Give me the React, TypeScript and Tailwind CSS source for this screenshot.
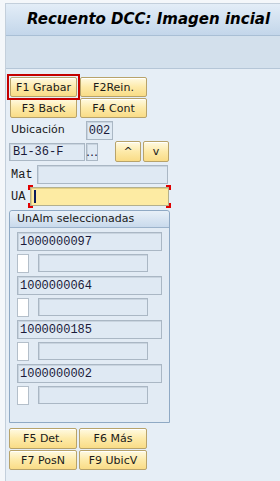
import React from "react";

const sans = { fontFamily: '"DejaVu Sans", "Liberation Sans", sans-serif' };
const mono = { fontFamily: '"Liberation Mono", "DejaVu Sans Mono", monospace' };

const btn =
  "flex items-center justify-center rounded-[2px] border border-[#b8a36a] bg-gradient-to-b from-[#fffae2] via-[#fdeaa9] to-[#f9dc86] text-[11px] leading-none text-[#1a1a1a] shadow-[inset_0_1px_0_#ffffff]";

const field =
  "border border-[#aab7c4] bg-[#dfe9f3] shadow-[inset_1px_1px_0_#c9d4df] text-[12px] leading-none text-[#1a1a3a] flex items-center";

function Btn({ label, w, h = 20, extra = "" }: { label: string; w: number; h?: number; extra?: string }) {
  return (
    <div className={`${btn} ${extra}`} style={{ ...sans, width: w, height: h }}>
      {label}
    </div>
  );
}

function Item({ value }: { value: string }) {
  return (
    <div className="flex flex-col gap-[3px]">
      <div className={`${field} h-[19px] w-[145px] pl-[2px]`} style={mono}>
        {value}
      </div>
      <div className="flex gap-[9px]">
        <div className="h-[19px] w-[12px] border border-[#b4bfca] bg-white" />
        <div className={`${field} h-[18px] w-[110px]`} />
      </div>
    </div>
  );
}

export default function App() {
  return (
    <div className="h-[481px] w-[280px] overflow-hidden bg-[#f4f7fa] pl-[5px] pt-[3px]" style={sans}>
      <div className="flex h-[478px] flex-col border-l border-t border-[#c3cfdb] bg-[#e6eef6]">
        <div className="flex h-[32px] items-center border-b border-[#a9bfd5] bg-gradient-to-b from-[#e3edf7] to-[#c3d6ea] pl-[21px]">
          <span className="text-[15px] font-bold italic text-black" style={sans}>
            Recuento DCC: Imagen incial
          </span>
        </div>
        <div className="h-[33px] border-b border-[#b5c6d7] bg-[#d3e0ec]" />
        <div className="flex flex-col pl-[3px]">
          <div className="mt-[8px] flex gap-[3px] pl-[1px]">
            <div className="relative">
              <Btn label="F1 Grabar" w={67} />
              <div className="absolute -inset-[3px] border-2 border-[#c40000]" />
            </div>
            <Btn label="F2Rein." w={67} />
          </div>
          <div className="mt-[1px] flex gap-[3px] pl-[1px]">
            <Btn label="F3 Back" w={67} />
            <Btn label="F4 Cont" w={67} />
          </div>
          <div className="mt-[3px] flex items-center">
            <span className="ml-[2px] w-[75px] text-[11px] text-[#1a1a1a]">Ubicación</span>
            <div className={`${field} h-[19px] w-[27px] justify-center`} style={mono}>
              002
            </div>
          </div>
          <div className="mt-[1px] flex items-center">
            <div className={`${field} h-[18px] w-[76px] pl-[3px]`} style={mono}>
              B1-36-F
            </div>
            <div className={`${field} ml-[1px] h-[18px] w-[12px] justify-center text-[9px]`}>…</div>
            <Btn label="^" w={26} h={21} extra="ml-[17px]" />
            <Btn label="v" w={26} h={21} extra="ml-[2px]" />
          </div>
          <div className="mt-[3px] flex items-center">
            <span className="ml-[2px] w-[26px] text-[12px] text-[#1a1a1a]" style={mono}>
              Mat
            </span>
            <div className={`${field} h-[19px] w-[131px]`} />
          </div>
          <div className="mt-[3px] flex items-center">
            <span className="ml-[2px] w-[19px] text-[12px] text-[#1a1a1a]" style={mono}>
              UA
            </span>
            <div className="relative">
              <div className="flex h-[19px] w-[139px] items-center border border-[#b3b08e] bg-[#fdeba3] pl-[3px] shadow-[inset_1px_1px_0_#e3cf82]">
                <div className="h-[13px] w-[2px] bg-[#0a1a5a]" />
              </div>
              <div className="absolute -left-[2px] -top-[2px] h-[5px] w-[5px] border-l-2 border-t-2 border-[#e00000]" />
              <div className="absolute -right-[2px] -top-[2px] h-[5px] w-[5px] border-r-2 border-t-2 border-[#e00000]" />
              <div className="absolute -bottom-[2px] -left-[2px] h-[5px] w-[5px] border-b-2 border-l-2 border-[#e00000]" />
              <div className="absolute -bottom-[2px] -right-[2px] h-[5px] w-[5px] border-b-2 border-r-2 border-[#e00000]" />
            </div>
          </div>
          <div className="mt-[4px] h-[213px] w-[161px] rounded-t-[3px] border border-[#8fa9c4] bg-[#e2ebf4]">
            <div className="flex h-[17px] items-center rounded-t-[3px] border-b border-[#9cb3cb] bg-gradient-to-b from-[#e8f0f8] to-[#c9daec] pl-[7px] text-[11px] text-[#1a1a1a]">
              UnAlm seleccionadas
            </div>
            <div className="flex flex-col gap-[3px] pl-[7px] pt-[4px]">
              <Item value="1000000097" />
              <Item value="1000000064" />
              <Item value="1000000185" />
              <Item value="1000000002" />
            </div>
          </div>
          <div className="mt-[5px] flex gap-[2px]">
            <Btn label="F5 Det." w={68} h={21} />
            <Btn label="F6 Más" w={68} h={21} />
          </div>
          <div className="mt-[1px] flex gap-[2px]">
            <Btn label="F7 PosN" w={68} h={20} />
            <Btn label="F9 UbicV" w={68} h={20} />
          </div>
        </div>
      </div>
    </div>
  );
}
